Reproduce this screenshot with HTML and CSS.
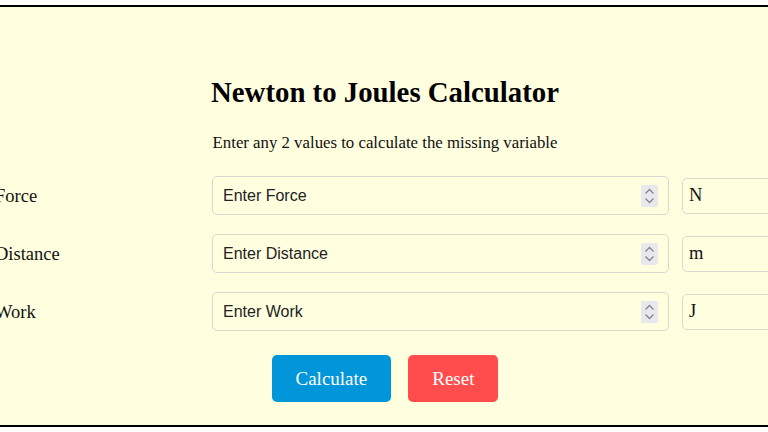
FILE: index.html
```html
<!DOCTYPE html>
<html lang="en">
<head>
    <meta charset="UTF-8">
    <meta name="viewport" content="width=device-width, initial-scale=1.0">
    <title>Newton to Joules Calculator</title>
    <link rel="stylesheet" href="styles.css">
</head>
<body>
<div class="page">
    <div class="calculator">
        <h2>Newton to Joules Calculator</h2>
        <p class="hint">Enter any 2 values to calculate the missing variable</p>

        <div class="rows">
            <label class="label" for="force">Force</label>
            <div class="field">
                <input type="text" id="force" placeholder="Enter Force">
                <span class="spin">
                    <svg width="17" height="22" viewBox="0 0 17 22"><path d="M4.5 8.5 L8.5 4.5 L12.5 8.5 M4.5 13.5 L8.5 17.5 L12.5 13.5" fill="none" stroke="#85858c" stroke-width="1.3"/></svg>
                </span>
            </div>
            <input type="text" class="unit" value="N" readonly>

            <label class="label" for="distance">Distance</label>
            <div class="field">
                <input type="text" id="distance" placeholder="Enter Distance">
                <span class="spin">
                    <svg width="17" height="22" viewBox="0 0 17 22"><path d="M4.5 8.5 L8.5 4.5 L12.5 8.5 M4.5 13.5 L8.5 17.5 L12.5 13.5" fill="none" stroke="#85858c" stroke-width="1.3"/></svg>
                </span>
            </div>
            <input type="text" class="unit" value="m" readonly>

            <label class="label" for="work">Work</label>
            <div class="field">
                <input type="text" id="work" placeholder="Enter Work">
                <span class="spin">
                    <svg width="17" height="22" viewBox="0 0 17 22"><path d="M4.5 8.5 L8.5 4.5 L12.5 8.5 M4.5 13.5 L8.5 17.5 L12.5 13.5" fill="none" stroke="#85858c" stroke-width="1.3"/></svg>
                </span>
            </div>
            <input type="text" class="unit" value="J" readonly>
        </div>

        <div class="buttons">
            <button class="btn calc">Calculate</button>
            <button class="btn reset">Reset</button>
        </div>
    </div>
</div>
</body>
</html>
```

FILE: styles.css
```css
body {
    margin: 0;
    overflow: hidden;
    font-family: 'Liberation Serif', 'Times New Roman', serif;
    background: #ffffff;
}

.page {
    display: flex;
    justify-content: center;
    padding-top: 5px;
}

.calculator {
    flex: none;
    width: 780px;
    margin-left: 2px;
    padding: 69px 0 23px;
    background: #ffffe0;
    border: 2px solid #000;
    text-align: center;
}

h2 {
    margin: 0;
    font-size: 28.8px;
    line-height: 32px;
    color: #000;
}

.hint {
    margin: 25px 0 0;
    font-size: 16.8px;
    line-height: 19px;
    color: #111;
}

.rows {
    display: grid;
    grid-template-columns: 217px 470px 93px;
    row-gap: 19px;
    align-items: center;
    margin-top: 24px;
    text-align: left;
}

.label {
    font-size: 18.5px;
    color: #111;
    padding-top: 2px;
}

.field {
    display: flex;
    align-items: center;
    box-sizing: border-box;
    width: 457px;
    height: 39px;
    padding: 1px 10px 0;
    border: 1px solid #d8d8d0;
    border-radius: 5px;
}

.field input {
    flex: 1;
    min-width: 0;
    border: none;
    outline: none;
    padding: 0;
    background: transparent;
    font-family: 'Liberation Sans', Arial, sans-serif;
    font-size: 16px;
    color: #222;
}

.field input::placeholder {
    color: #222;
    opacity: 1;
}

.spin {
    display: flex;
    width: 17px;
    height: 22px;
    background: #e9e9ed;
    border-radius: 2px;
}

.unit {
    box-sizing: border-box;
    width: 100%;
    height: 36px;
    padding: 0 6px;
    border: 1px solid #d8d8d0;
    border-radius: 5px;
    background: transparent;
    font-family: 'Liberation Serif', 'Times New Roman', serif;
    font-size: 18.5px;
    color: #111;
    outline: none;
}

.buttons {
    display: flex;
    justify-content: center;
    gap: 17px;
    margin-top: 24px;
}

.btn {
    height: 47px;
    padding: 0 24px;
    border: none;
    border-radius: 5px;
    font-family: 'Liberation Serif', 'Times New Roman', serif;
    font-size: 19px;
    color: #fff;
    cursor: pointer;
}

.calc {
    background: #0096d9;
}

.reset {
    background: #ff4c4c;
}
```
